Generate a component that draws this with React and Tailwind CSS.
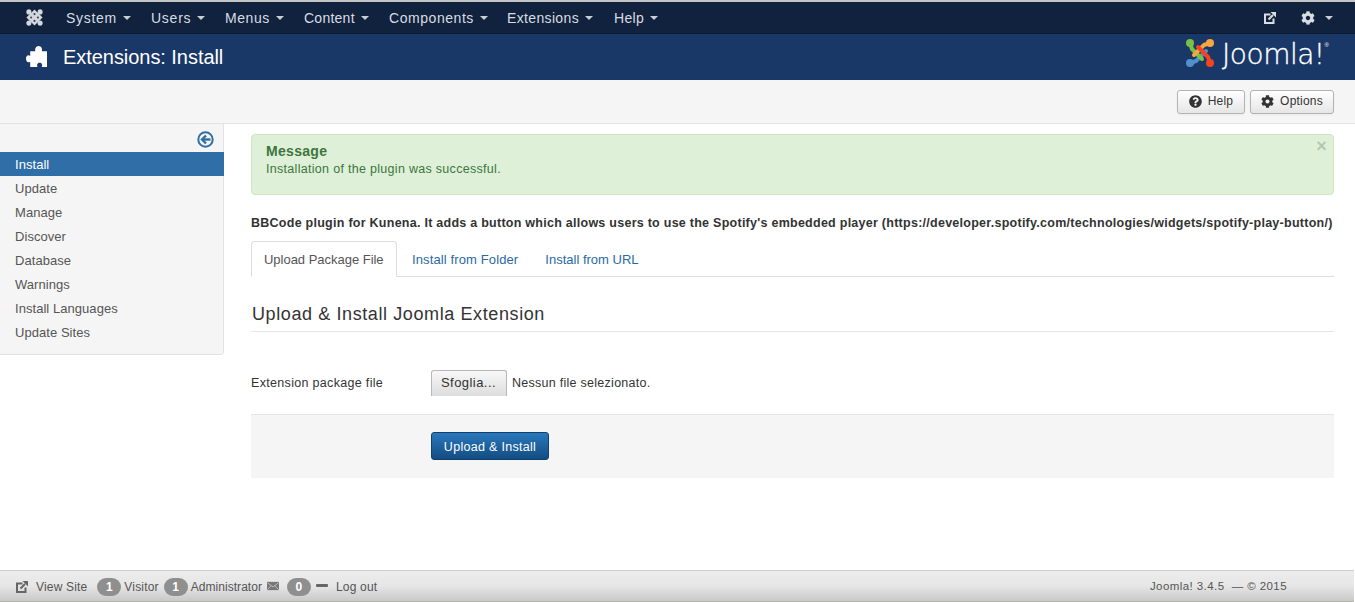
import React from "react";
import { FaCog, FaQuestionCircle } from "react-icons/fa";

const Caret = ({ className = "" }) => (
  <span className={"inline-block w-0 h-0 border-x-[4px] border-x-transparent border-t-[4px] border-t-[#c9cdd4] " + className} />
);

const JoomlaMark = () => (
  <svg width="17" height="17" viewBox="0 0 20 20">
    <polygon points="10,0.5 19.5,10 10,19.5 0.5,10" fill="#d4d7dc" />
    <g fill="#d4d7dc">
      <circle cx="3.4" cy="3.4" r="3" />
      <circle cx="16.6" cy="3.4" r="3" />
      <circle cx="3.4" cy="16.6" r="3" />
      <circle cx="16.6" cy="16.6" r="3" />
    </g>
    <g fill="#3c4a60">
      <circle cx="10" cy="6" r="1.3" />
      <circle cx="14" cy="10" r="1.3" />
      <circle cx="10" cy="14" r="1.3" />
      <circle cx="6" cy="10" r="1.3" />
    </g>
  </svg>
);

const JoomlaColor = () => (
  <svg width="30" height="30" viewBox="0 0 30 30" fill="none" strokeLinecap="round" strokeLinejoin="round">
    <path d="M5 25 L11 23 L21 13" stroke="#5091cd" strokeWidth="4" />
    <circle cx="5" cy="25" r="4" fill="#5091cd" />
    <path d="M5 5 L7 11 L17 21" stroke="#7ac143" strokeWidth="4" />
    <circle cx="5" cy="5" r="4" fill="#7ac143" />
    <path d="M25 5 L19 7 L9 17" stroke="#f9a541" strokeWidth="4" />
    <circle cx="25" cy="5" r="4" fill="#f9a541" />
    <path d="M25 25 L23 19 L13 9" stroke="#f44321" strokeWidth="4" />
    <circle cx="25" cy="25" r="4" fill="#f44321" />
  </svg>
);

const Puzzle = () => (
  <svg width="21" height="21" viewBox="0 0 20 20" fill="#fff">
    <path d="M4 5 H9 C8 3 9.5 0 12 0 C14.5 0 16 3 15 5 H20 V20 H15 C16 18 15 16 13 16 C11 16 10 18 11 20 H4 V15 C2 16.5 0 15 0 12 C0 9.5 2 8 4 9.5 Z" />
  </svg>
);

const NewTab = ({ c, s = 12 }) => (
  <svg width={s} height={s} viewBox="0 0 12 12" fill="none">
    <path d="M6.5 2.5 H1 V11 H9.5 V6.5" stroke={c} strokeWidth="2" />
    <path d="M4.5 7.5 L9 3" stroke={c} strokeWidth="2" />
    <path d="M6.5 0 H12 V5.5 Z" fill={c} />
  </svg>
);

const BackCircle = () => (
  <svg width="17" height="17" viewBox="0 0 17 17" fill="none" stroke="#2f6fa8">
    <circle cx="8.5" cy="8.5" r="7.2" strokeWidth="2" />
    <path d="M13.5 8.5 H6" strokeWidth="2.4" />
    <path d="M9 4.5 L5 8.5 L9 12.5" strokeWidth="2.4" />
  </svg>
);

const Mail = () => (
  <svg width="12" height="10" viewBox="0 0 13 10">
    <rect width="13" height="9" y="0.5" fill="#777" />
    <path d="M0.5 1.5 L6.5 6 L12.5 1.5 M0.5 9 L4.5 4.5 M12.5 9 L8.5 4.5" stroke="#cfcfcf" strokeWidth="0.8" fill="none" />
  </svg>
);

const menus = [
  ["System", "w-[85px] tracking-[0.7px]"],
  ["Users", "w-[74px] tracking-[0.75px]"],
  ["Menus", "w-[79px] tracking-[0.55px]"],
  ["Content", "w-[85px] tracking-[0.25px]"],
  ["Components", "w-[118px] tracking-[0.55px]"],
  ["Extensions", "w-[107px] tracking-[0.35px]"],
  ["Help", "w-[60px] tracking-[0.3px]"],
];
const side = ["Install", "Update", "Manage", "Discover", "Database", "Warnings", "Install Languages", "Update Sites"];

const Badge = ({ n }) => (
  <span className="inline-flex items-center justify-center w-[24px] h-[18px] rounded-full bg-[#8f8f8f] text-white text-[12px] font-bold">{n}</span>
);

export default function App() {
  return (
    <div className="h-[602px] w-[1355px] overflow-hidden flex flex-col bg-white text-[13px] text-[#333333]" style={{ fontFamily: '"Liberation Sans", Arial, sans-serif' }}>
      <div className="h-[2px] bg-[#c4c4c4] shrink-0" />
      <nav className="h-[32px] shrink-0 bg-[#10223e] border-b border-[#0c1a30] flex items-center text-[#d9dce1] text-[14px]">
        <div className="w-[66px] flex justify-center pl-[2px]"><JoomlaMark /></div>
        <div className="flex items-center pt-[1px]">
          {menus.map(([m, cls]) => (
            <span key={m} className={"flex items-center gap-[6px] " + cls}>{m}<Caret /></span>
          ))}
        </div>
        <div className="ml-auto flex items-center mr-[22px]">
          <span className="mr-[25px] flex"><NewTab c="#d9dce1" /></span>
          <FaCog className="w-[14px] h-[14px] mr-[10px]" />
          <Caret />
        </div>
      </nav>
      <header className="h-[46px] shrink-0 bg-[#1a3867] flex items-center text-white">
        <span className="ml-[26px] flex -mt-[1px]"><Puzzle /></span>
        <h1 className="ml-[16px] text-[20px] tracking-[-0.05px]">Extensions: Install</h1>
        <div className="ml-auto mr-[26px] flex items-center -mt-[9px]">
          <JoomlaColor />
          <span className="text-white text-[28px] ml-[7px] mt-[4px] leading-none tracking-[-0.5px] [-webkit-text-stroke:0.35px_white]" style={{ fontFamily: '"DejaVu Sans", sans-serif', fontWeight: 200 }}>Joomla!</span>
          <span className="text-[6px] text-white self-start mt-[4px]">®</span>
        </div>
      </header>
      <div className="h-[44px] shrink-0 bg-[#f5f5f5] border-b border-[#e3e3e3] flex items-center justify-end pr-[21px] gap-[5px]">
        <button className="h-[24px] w-[68px] flex items-center justify-center gap-[6px] bg-gradient-to-b from-white to-[#e6e6e6] border border-[#b3b3b3] rounded-[3px] shadow-[0_1px_2px_rgba(0,0,0,0.05)] text-[12px] text-[#333] tracking-[0.2px]">
          <FaQuestionCircle className="w-[13px] h-[13px]" /> <span className="-mt-[1px]">Help</span>
        </button>
        <button className="h-[24px] w-[84px] flex items-center justify-center gap-[6px] bg-gradient-to-b from-white to-[#e6e6e6] border border-[#b3b3b3] rounded-[3px] shadow-[0_1px_2px_rgba(0,0,0,0.05)] text-[12px] text-[#333] tracking-[0.2px]">
          <FaCog className="w-[13px] h-[13px]" /> <span className="-mt-[1px]">Options</span>
        </button>
      </div>
      <div className="flex-1 flex min-h-0">
        <aside className="w-[224px] h-[231px] shrink-0 bg-[#f5f5f5] border-r border-b border-[#e3e3e3] rounded-br-[4px] flex flex-col">
          <div className="h-[28px] flex items-center justify-end pr-[9px] pt-[2px]">
            <BackCircle />
          </div>
          <ul className="text-[13px] tracking-[0.05px]">
            {side.map((s, i) => (
              <li key={s} className={"h-[24px] flex items-center pl-[15px] pt-[1px] " + (i === 0 ? "bg-[#2f6ea7] text-white -mr-px" : "text-[#555]")}>{s}</li>
            ))}
          </ul>
        </aside>
        <main className="flex-1 min-w-0 pl-[27px] pr-[21px] pt-[10px]">
          <div className="relative h-[61px] rounded-[4px] bg-[#dff0d8] border border-[#d0e6be] text-[#3c763d] pl-[14px] pt-[8px] tracking-[0.3px]">
            <div className="font-bold text-[14px] leading-[17px]">Message</div>
            <div className="text-[12.5px] leading-[19px]">Installation of the plugin was successful.</div>
            <span className="absolute right-[6px] top-[1px] text-[18px] font-bold leading-[20px] text-[#b5c8ae]">×</span>
          </div>
          <p className="mt-[19px] font-bold text-[12.5px] leading-[18px] whitespace-nowrap tracking-[0.26px]">BBCode plugin for Kunena. It adds a button which allows users to use the Spotify's embedded player (https://developer.spotify.com/technologies/widgets/spotify-play-button/)</p>
          <div className="mt-[9px] h-[36px] border-b border-[#ddd] flex text-[13px]">
            <span className="h-[36px] w-[146px] pl-[12px] pt-[1px] flex items-center bg-white border border-[#ddd] border-b-white rounded-t-[4px] text-[#555] tracking-[-0.02px] whitespace-nowrap">Upload Package File</span>
            <span className="pl-[15px] pr-[12px] pt-[2px] flex items-center text-[#2a69a5] tracking-[0.12px]">Install from Folder</span>
            <span className="pl-[15px] pt-[2px] flex items-center text-[#2a69a5]">Install from URL</span>
          </div>
          <h2 className="mt-[25px] pl-px pb-[5px] border-b border-[#e5e5e5] text-[18px] leading-[24px] text-[#333] tracking-[0.6px]">Upload &amp; Install Joomla Extension</h2>
          <div className="mt-[38px] flex items-center h-[26px]">
            <label className="w-[180px] text-[#333] text-[12.5px] tracking-[0.32px]">Extension package file</label>
            <button className="w-[76px] h-[26px] pb-[2px] pr-[1px] bg-gradient-to-b from-[#f8f8f8] to-[#dddddd] border border-[#b8b8b8] border-b-0 rounded-t-[3px] text-[13px] text-[#333] tracking-[0.45px]">Sfoglia...</button>
            <span className="ml-[5px] text-[12.5px] tracking-[0.27px]">Nessun file selezionato.</span>
          </div>
          <div className="mt-[18px] h-[64px] bg-[#f5f5f5] border-t border-[#e5e5e5] pl-[180px] pt-[17px]">
            <button className="w-[118px] h-[28px] pt-[2px] rounded-[3px] bg-gradient-to-b from-[#2a78bd] to-[#124d82] border border-[#113f6b] text-white text-[12.5px] tracking-[0.3px]">Upload &amp; Install</button>
          </div>
        </main>
      </div>
      <footer className="h-[32px] pt-[1px] shrink-0 mr-px bg-gradient-to-b from-[#ececec] via-[#e6e6e6] to-[#c9c9c9] border-t border-[#cfcfcf] border-b border-b-[#b4b6ac] flex items-center text-[#555] text-[12px] tracking-[0.17px]">
        <span className="ml-[16px] flex"><NewTab c="#666" /></span>
        <span className="ml-[8px]">View Site</span>
        <span className="ml-[10px]"><Badge n="1" /></span>
        <span className="ml-[3px]">Visitor</span>
        <span className="ml-[5px]"><Badge n="1" /></span>
        <span className="ml-[3px] tracking-[0.05px]">Administrator</span>
        <span className="ml-[5px] flex -mt-[2px]"><Mail /></span>
        <span className="ml-[8px]"><Badge n="0" /></span>
        <span className="ml-[5px] w-[12px] h-[3px] rounded-[1px] bg-[#666] -mt-[3px]" />
        <span className="ml-[8px]">Log out</span>
        <span className="ml-auto mr-[67px] text-[11.5px] tracking-[0.42px]">Joomla! 3.4.5 &nbsp;— © 2015</span>
      </footer>
    </div>
  );
}
